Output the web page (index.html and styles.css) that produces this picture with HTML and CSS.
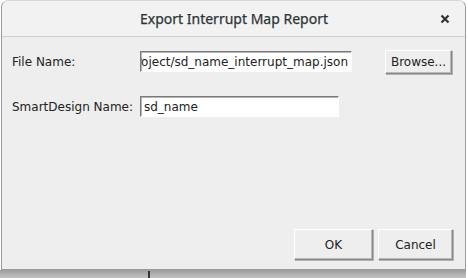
FILE: index.html
```html
<!DOCTYPE html>
<html lang="en">
<head>
    <meta charset="UTF-8">
    <title>Export Interrupt Map Report</title>
    <link rel="stylesheet" href="styles.css">
</head>
<body>
    <div class="dialog">
        <div class="titlebar">
            <span class="title">Export Interrupt Map Report</span>
            <svg class="close" width="10" height="10" viewBox="0 0 10 10">
                <path d="M1.5 1.5 L8.5 8.5 M8.5 1.5 L1.5 8.5" stroke="#2e3436" stroke-width="2.2" fill="none"/>
            </svg>
        </div>
        <div class="content">
            <div class="row">
                <label class="lbl">File Name:</label>
                <div class="field wide"><span>project/sd_name_interrupt_map.json</span></div>
                <button class="btn browse">Browse...</button>
            </div>
            <div class="row second">
                <label class="lbl">SmartDesign Name:</label>
                <div class="field narrow left"><span>sd_name</span></div>
            </div>
            <div class="actions">
                <button class="btn ok">OK</button>
                <button class="btn cancel">Cancel</button>
            </div>
        </div>
    </div>
    <div class="shadow"><span class="tick"></span></div>
</body>
</html>
```

FILE: styles.css
```css
html, body {
    margin: 0;
    padding: 0;
}
body {
    width: 468px;
    height: 278px;
    overflow: hidden;
    background-color: #ffffff;
    font-family: 'DejaVu Sans', sans-serif;
    font-size: 12px;
    color: #222222;
}
.dialog {
    margin-left: 1px;
    width: 465px;
    height: 270px;
    box-sizing: border-box;
    border: 1px solid #9a9a9a;
    border-top-color: #d8d8d8;
    border-radius: 7px 7px 0 0;
    background-color: #eeeeee;
    display: flex;
    flex-direction: column;
}
.titlebar {
    height: 36px;
    flex: none;
    box-sizing: border-box;
    border-bottom: 1px solid #cfcfcf;
    border-radius: 7px 7px 0 0;
    background-color: #f2f2f2;
    display: flex;
    align-items: center;
    justify-content: center;
    position: relative;
}
.title {
    font-family: 'Noto Sans', sans-serif;
    font-size: 14px;
    color: #2e3436;
    margin-left: 1px;
    -webkit-text-stroke: 0.25px #2e3436;
}
.close {
    position: absolute;
    right: 15px;
    top: 13px;
}
.content {
    flex: 1;
    display: flex;
    flex-direction: column;
    padding: 13px 12px 9px 10px;
}
.row {
    display: flex;
    align-items: center;
    height: 23px;
}
.row.second {
    margin-top: 22px;
}
.lbl {
    width: 128px;
    flex: none;
}
.field {
    height: 21px;
    box-sizing: border-box;
    background: #ffffff;
    border: 1px solid #ffffff;
    border-top-color: #7a7a7a;
    border-left-color: #7a7a7a;
    box-shadow: inset 1px 1px 0 #b5b5b5;
    display: flex;
    align-items: center;
    justify-content: flex-end;
    overflow: hidden;
    white-space: nowrap;
    padding-right: 3px;
}
.field.left {
    justify-content: flex-start;
    padding-left: 3px;
}
.wide {
    width: 212px;
}
.narrow {
    width: 199px;
}
.btn {
    font-family: 'DejaVu Sans', sans-serif;
    font-size: 12px;
    color: #222222;
    background: #eeeeee;
    border: 1px solid #8a8a8a;
    border-top-color: #ffffff;
    border-left-color: #ffffff;
    box-shadow: 1px 1px 0 #b0b0b0, inset -1px -1px 0 #b8b8b8;
    padding: 0;
    margin: 0;
}
.browse {
    margin-left: 33px;
    width: 67px;
    height: 24px;
}
.actions {
    margin-top: auto;
    display: flex;
    justify-content: flex-end;
    gap: 5px;
}
.ok {
    width: 79px;
    height: 31px;
}
.cancel {
    width: 75px;
    height: 31px;
}
.shadow {
    height: 8px;
    width: 466px;
    background: linear-gradient(#9d9d9d, #c4c4c4);
    position: relative;
}
.tick {
    position: absolute;
    left: 148px;
    top: 1px;
    width: 2px;
    height: 7px;
    background: #333333;
}
```
